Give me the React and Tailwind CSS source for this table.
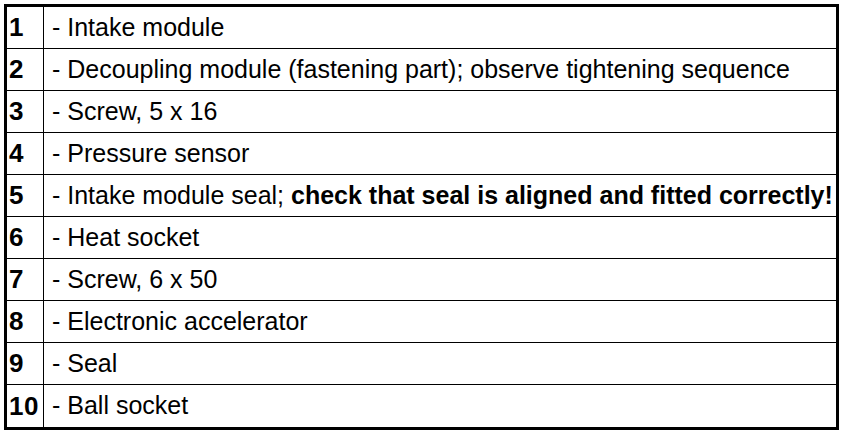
import React from 'react'

const rows = [
    { n: '1', text: '- Intake module' },
    { n: '2', text: '- Decoupling module (fastening part); observe tightening sequence' },
    { n: '3', text: '- Screw, 5 x 16' },
    { n: '4', text: '- Pressure sensor' },
    { n: '5', text: '- Intake module seal; ', bold: 'check that seal is aligned and fitted correctly!' },
    { n: '6', text: '- Heat socket' },
    { n: '7', text: '- Screw, 6 x 50' },
    { n: '8', text: '- Electronic accelerator' },
    { n: '9', text: '- Seal' },
    { n: '10', text: '- Ball socket' },
]

function App() {
    return (
        <div className="w-[864px] h-[436px] bg-white pt-[4px] pl-[4px] font-['Liberation_Sans',Arial,sans-serif] text-black">
            <div className="w-[835px] border-[3px] border-black flex flex-col">
                {rows.map((row, i) => (
                    <div
                        key={row.n}
                        className={`flex h-[42px] ${i < rows.length - 1 ? 'border-b border-black' : ''}`}
                    >
                        {/* item number */}
                        <div className="w-[37px] shrink-0 border-r border-black flex items-center pl-[2px] text-[26px] font-bold tracking-[0.5px]">
                            {row.n}
                        </div>
                        <div className="flex items-center pl-[8px] text-[25px] whitespace-nowrap">
                            <span className="whitespace-pre">{row.text}</span>
                            {row.bold && <span className="font-bold">{row.bold}</span>}
                        </div>
                    </div>
                ))}
            </div>
        </div>
    )
}

export default App
